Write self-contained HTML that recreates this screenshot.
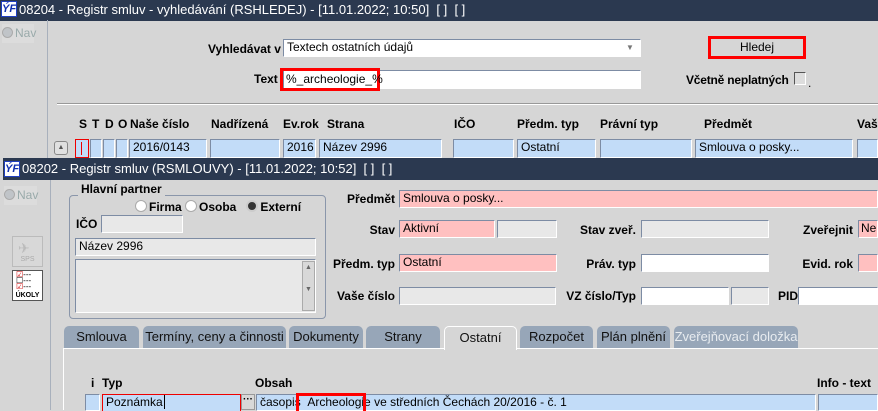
<!DOCTYPE html>
<html><head><meta charset="utf-8"><style>
*{box-sizing:border-box;margin:0;padding:0}
body{width:878px;height:410px;overflow:hidden;background:#d6d6d6;font-family:"Liberation Sans",Arial,sans-serif;font-size:12px;color:#000;position:relative}
.a{position:absolute;white-space:nowrap}
.bar{background:#2b3950;color:#fff;font-size:13px;height:21px;line-height:20px;padding-left:19px}
.logo{position:absolute;left:1px;top:2px;width:16px;height:16px;background:#fff;border:1px solid #2040c0;color:#1030b0;font:italic bold 11px "Liberation Sans",sans-serif;line-height:14px;text-align:center}
.f{position:absolute;border:1px solid #7d8ca4;border-right-color:#fff;border-bottom-color:#fff;background:#fff;padding-left:3px;line-height:15px;white-space:nowrap;overflow:hidden;font-size:12px}
.b{background:#c2dcf8}.p{background:#ffc0c0}.g{background:#e8e8e8}
.l{position:absolute;font-weight:bold;white-space:nowrap;font-size:12px}
.r{text-align:right}
.tab{position:absolute;top:326px;height:23px;background:#97a6b8;border-radius:5px 5px 0 0;text-align:center;line-height:22px;font-size:13px;color:#111}
.rad{display:inline-block;width:12px;height:12px;border-radius:50%;background:#fff;border:1px solid #aaa;vertical-align:-1px;margin-right:2px}
</style></head><body>
<div class="a bar" style="left:0;top:0;width:878px">08204 - Registr smluv - vyhledávání (RSHLEDEJ) - [11.01.2022; 10:50]&nbsp; [ ]&nbsp; [ ]</div>
<div class="logo" style="top:1px">ÝF</div>
<div class="a" style="left:47px;top:20px;width:1px;height:138px;background:#a8b0bc"></div>
<div class="a" style="left:2px;top:24px;width:32px;height:19px;background:#dcdcdc;color:#9aa;font-size:12px;line-height:19px"><span class="rad" style="background:#c0c4c8;width:11px;height:11px"></span>Nav</div>
<div class="l" style="left:208px;top:42px">Vyhledávat v</div>
<div class="f" style="left:283px;top:39px;width:358px;height:18px">Textech ostatních údajů</div>
<div class="a" style="left:626px;top:42px;width:13px;height:12px;color:#777;font-size:8px;line-height:12px">▼</div>
<div class="l" style="left:254px;top:72px">Text</div>
<div class="f" style="left:283px;top:70px;width:358px;height:19px"></div>
<div class="a" style="left:280px;top:68px;width:100px;height:23px;border:3px solid #f00;padding-left:3px;line-height:16px;font-size:12px">%_archeologie_%</div>
<div class="a" style="left:708px;top:36px;width:98px;height:23px;border:3px solid #f00;text-align:center;line-height:17px;font-size:12px">Hledej</div>
<div class="l" style="left:686px;top:73px;letter-spacing:-0.2px">Včetně neplatných</div>
<div class="a" style="left:794px;top:72px;width:12px;height:13px;border:1px solid #555;border-right-color:#fff;border-bottom-color:#fff;background:#ddd"></div>
<div class="a" style="left:808px;top:76px">.</div>
<div class="a" style="left:57px;top:103px;width:821px;height:2px;border-top:1px solid #999;border-bottom:1px solid #fff"></div>
<div class="l" style="left:79px;top:117px">S</div><div class="l" style="left:92px;top:117px">T</div><div class="l" style="left:105px;top:117px">D</div><div class="l" style="left:118px;top:117px">O</div>
<div class="l" style="left:130px;top:117px">Naše číslo</div><div class="l" style="left:211px;top:117px">Nadřízená</div><div class="l" style="left:283px;top:117px">Ev.rok</div><div class="l" style="left:327px;top:117px">Strana</div>
<div class="l" style="left:454px;top:117px">IČO</div><div class="l" style="left:517px;top:117px">Předm. typ</div><div class="l" style="left:600px;top:117px">Právní typ</div><div class="l" style="left:704px;top:117px">Předmět</div><div class="l" style="left:857px;top:117px">Vaš</div>
<div class="a" style="left:54px;top:141px;width:14px;height:14px;border:1px solid #888;border-radius:3px;background:#e0e0e0;font-size:7px;text-align:center;line-height:12px;color:#555">▲</div>
<div class="f b" style="left:75px;top:139px;width:14px;height:19px;border:1px solid #e00"></div>
<div class="a" style="left:81px;top:142px;width:1px;height:13px;background:#e00"></div>
<div class="f b" style="left:90px;top:139px;width:12px;height:19px"></div>
<div class="f b" style="left:103px;top:139px;width:12px;height:19px"></div>
<div class="f b" style="left:116px;top:139px;width:12px;height:19px"></div>
<div class="f b" style="left:129px;top:139px;width:78px;height:19px">2016/0143</div>
<div class="f b" style="left:210px;top:139px;width:70px;height:19px"></div>
<div class="f b" style="left:283px;top:139px;width:33px;height:19px">2016</div>
<div class="f b" style="left:319px;top:139px;width:123px;height:19px">Název 2996</div>
<div class="f b" style="left:453px;top:139px;width:61px;height:19px"></div>
<div class="f b" style="left:517px;top:139px;width:79px;height:19px">Ostatní</div>
<div class="f b" style="left:600px;top:139px;width:92px;height:19px"></div>
<div class="f b" style="left:695px;top:139px;width:158px;height:19px">Smlouva o posky...</div>
<div class="f b" style="left:857px;top:139px;width:21px;height:19px"></div>

<div class="a bar" style="left:3px;top:158px;width:875px;height:22px;padding-left:19px;line-height:22px">08202 - Registr smluv (RSMLOUVY) - [11.01.2022; 10:52]&nbsp; [ ]&nbsp; [ ]</div>
<div class="logo" style="left:4px;top:161px">ÝF</div>
<div class="a" style="left:50px;top:180px;width:1px;height:230px;background:#a8b0bc"></div>
<div class="a" style="left:4px;top:186px;width:33px;height:19px;background:#dcdcdc;color:#9aa;font-size:12px;line-height:19px"><span class="rad" style="background:#c0c4c8;width:11px;height:11px"></span>Nav</div>
<div class="a" style="left:12px;top:236px;width:31px;height:31px;border:1px solid #bbb;background:#d8d8d8;color:#aaa;font-size:7px;text-align:center;padding-top:19px">SPS</div>
<div class="a" style="left:18px;top:240px;color:#bbb;font-size:14px">✈</div>
<div class="a" style="left:12px;top:270px;width:31px;height:31px;border:1px solid #555;background:#fff;font-size:7px;font-weight:bold;text-align:center;padding-top:21px;line-height:8px">ÚKOLY</div>
<div class="a" style="left:16px;top:272px;font-size:8px;line-height:6px;color:#c00">☑<span style="color:#000">---</span><br><span style="color:#000">☐---</span><br>☑<span style="color:#000">---</span></div>

<div class="a" style="left:69px;top:195px;width:257px;height:124px;border:1px solid #8a96aa;border-radius:4px"></div>
<div class="l" style="left:78px;top:182px;background:#d6d6d6;padding:0 3px">Hlavní partner</div>
<div class="l" style="left:135px;top:200px;font-size:12px"><span class="rad"></span>Firma <span class="rad"></span>Osoba &nbsp; <span class="rad" style="background:#333;border:2px solid #ccc"></span>Externí</div>
<div class="l" style="left:76px;top:217px">IČO</div>
<div class="f g" style="left:101px;top:215px;width:82px;height:18px"></div>
<div class="f g" style="left:75px;top:238px;width:241px;height:18px">Název 2996</div>
<div class="f g" style="left:75px;top:259px;width:241px;height:54px"></div>
<div class="a" style="left:302px;top:261px;width:13px;height:50px;background:#d8d8d8;border:1px solid #aaa;font-size:7px;color:#666;text-align:center;line-height:11px">▲<br><br>▼</div>

<div class="l r" style="left:300px;width:95px;top:192px">Předmět</div>
<div class="f p" style="left:399px;top:190px;width:479px;height:18px">Smlouva o posky...</div>
<div class="l r" style="left:300px;width:95px;top:223px">Stav</div>
<div class="f p" style="left:399px;top:220px;width:96px;height:18px">Aktivní</div>
<div class="f g" style="left:497px;top:220px;width:60px;height:18px"></div>
<div class="l r" style="left:540px;width:96px;top:223px">Stav zveř.</div>
<div class="f g" style="left:641px;top:220px;width:128px;height:18px"></div>
<div class="l r" style="left:760px;width:93px;top:223px">Zveřejnit</div>
<div class="f p" style="left:858px;top:220px;width:20px;height:18px;padding-left:2px">Ne</div>
<div class="l r" style="left:300px;width:95px;top:257px">Předm. typ</div>
<div class="f p" style="left:399px;top:254px;width:158px;height:18px">Ostatní</div>
<div class="l r" style="left:540px;width:96px;top:257px">Práv. typ</div>
<div class="f" style="left:641px;top:254px;width:128px;height:18px"></div>
<div class="l r" style="left:760px;width:93px;top:257px">Evid. rok</div>
<div class="f p" style="left:858px;top:254px;width:20px;height:18px"></div>
<div class="l r" style="left:300px;width:95px;top:289px">Vaše číslo</div>
<div class="f g" style="left:399px;top:287px;width:157px;height:18px"></div>
<div class="l r" style="left:540px;width:96px;top:289px">VZ číslo/Typ</div>
<div class="f" style="left:641px;top:287px;width:88px;height:18px"></div>
<div class="f g" style="left:731px;top:287px;width:38px;height:18px"></div>
<div class="l" style="left:778px;top:289px">PID</div>
<div class="f" style="left:798px;top:287px;width:80px;height:18px"></div>

<div class="tab" style="left:64px;width:75px">Smlouva</div>
<div class="tab" style="left:143px;width:143px">Termíny, ceny a činnosti</div>
<div class="tab" style="left:289px;width:74px">Dokumenty</div>
<div class="tab" style="left:366px;width:74px">Strany</div>
<div class="tab" style="left:520px;width:73px">Rozpočet</div>
<div class="tab" style="left:597px;width:73px">Plán plnění</div>
<div class="tab" style="left:674px;width:124px;color:#e8ecf0">Zveřejňovací doložka</div>
<div class="a" style="left:63px;top:348px;width:815px;height:62px;border-top:1px solid #fff;border-left:1px solid #fff;background:#d6d6d6"></div>
<div class="tab" style="left:444px;width:73px;background:#d6d6d6;border:1px solid #fff;border-bottom:none;height:24px">Ostatní</div>

<div class="l" style="left:91px;top:376px">i</div>
<div class="l" style="left:102px;top:376px">Typ</div>
<div class="l" style="left:255px;top:376px">Obsah</div>
<div class="l" style="left:817px;top:376px">Info - text</div>
<div class="f b" style="left:85px;top:394px;width:15px;height:17px"></div>
<div class="f b" style="left:102px;top:394px;width:139px;height:17px;border:1px solid #e00;border-bottom:none">Poznámka<span style="border-left:1px solid #000;margin-left:1px"></span></div>
<div class="a" style="left:241px;top:394px;width:14px;height:16px;background:#d8d8d8;border:1px solid #999;font-weight:bold;font-size:10px;line-height:10px;text-align:center">···</div>
<div class="f b" style="left:256px;top:394px;width:560px;height:17px">časopis&nbsp;&nbsp;Archeologie ve středních Čechách 20/2016 - č. 1</div>
<div class="a" style="left:296px;top:393px;width:70px;height:18px;border:3px solid #f00;border-bottom:none"></div>
<div class="f b" style="left:818px;top:394px;width:60px;height:17px"></div>
</body></html>
